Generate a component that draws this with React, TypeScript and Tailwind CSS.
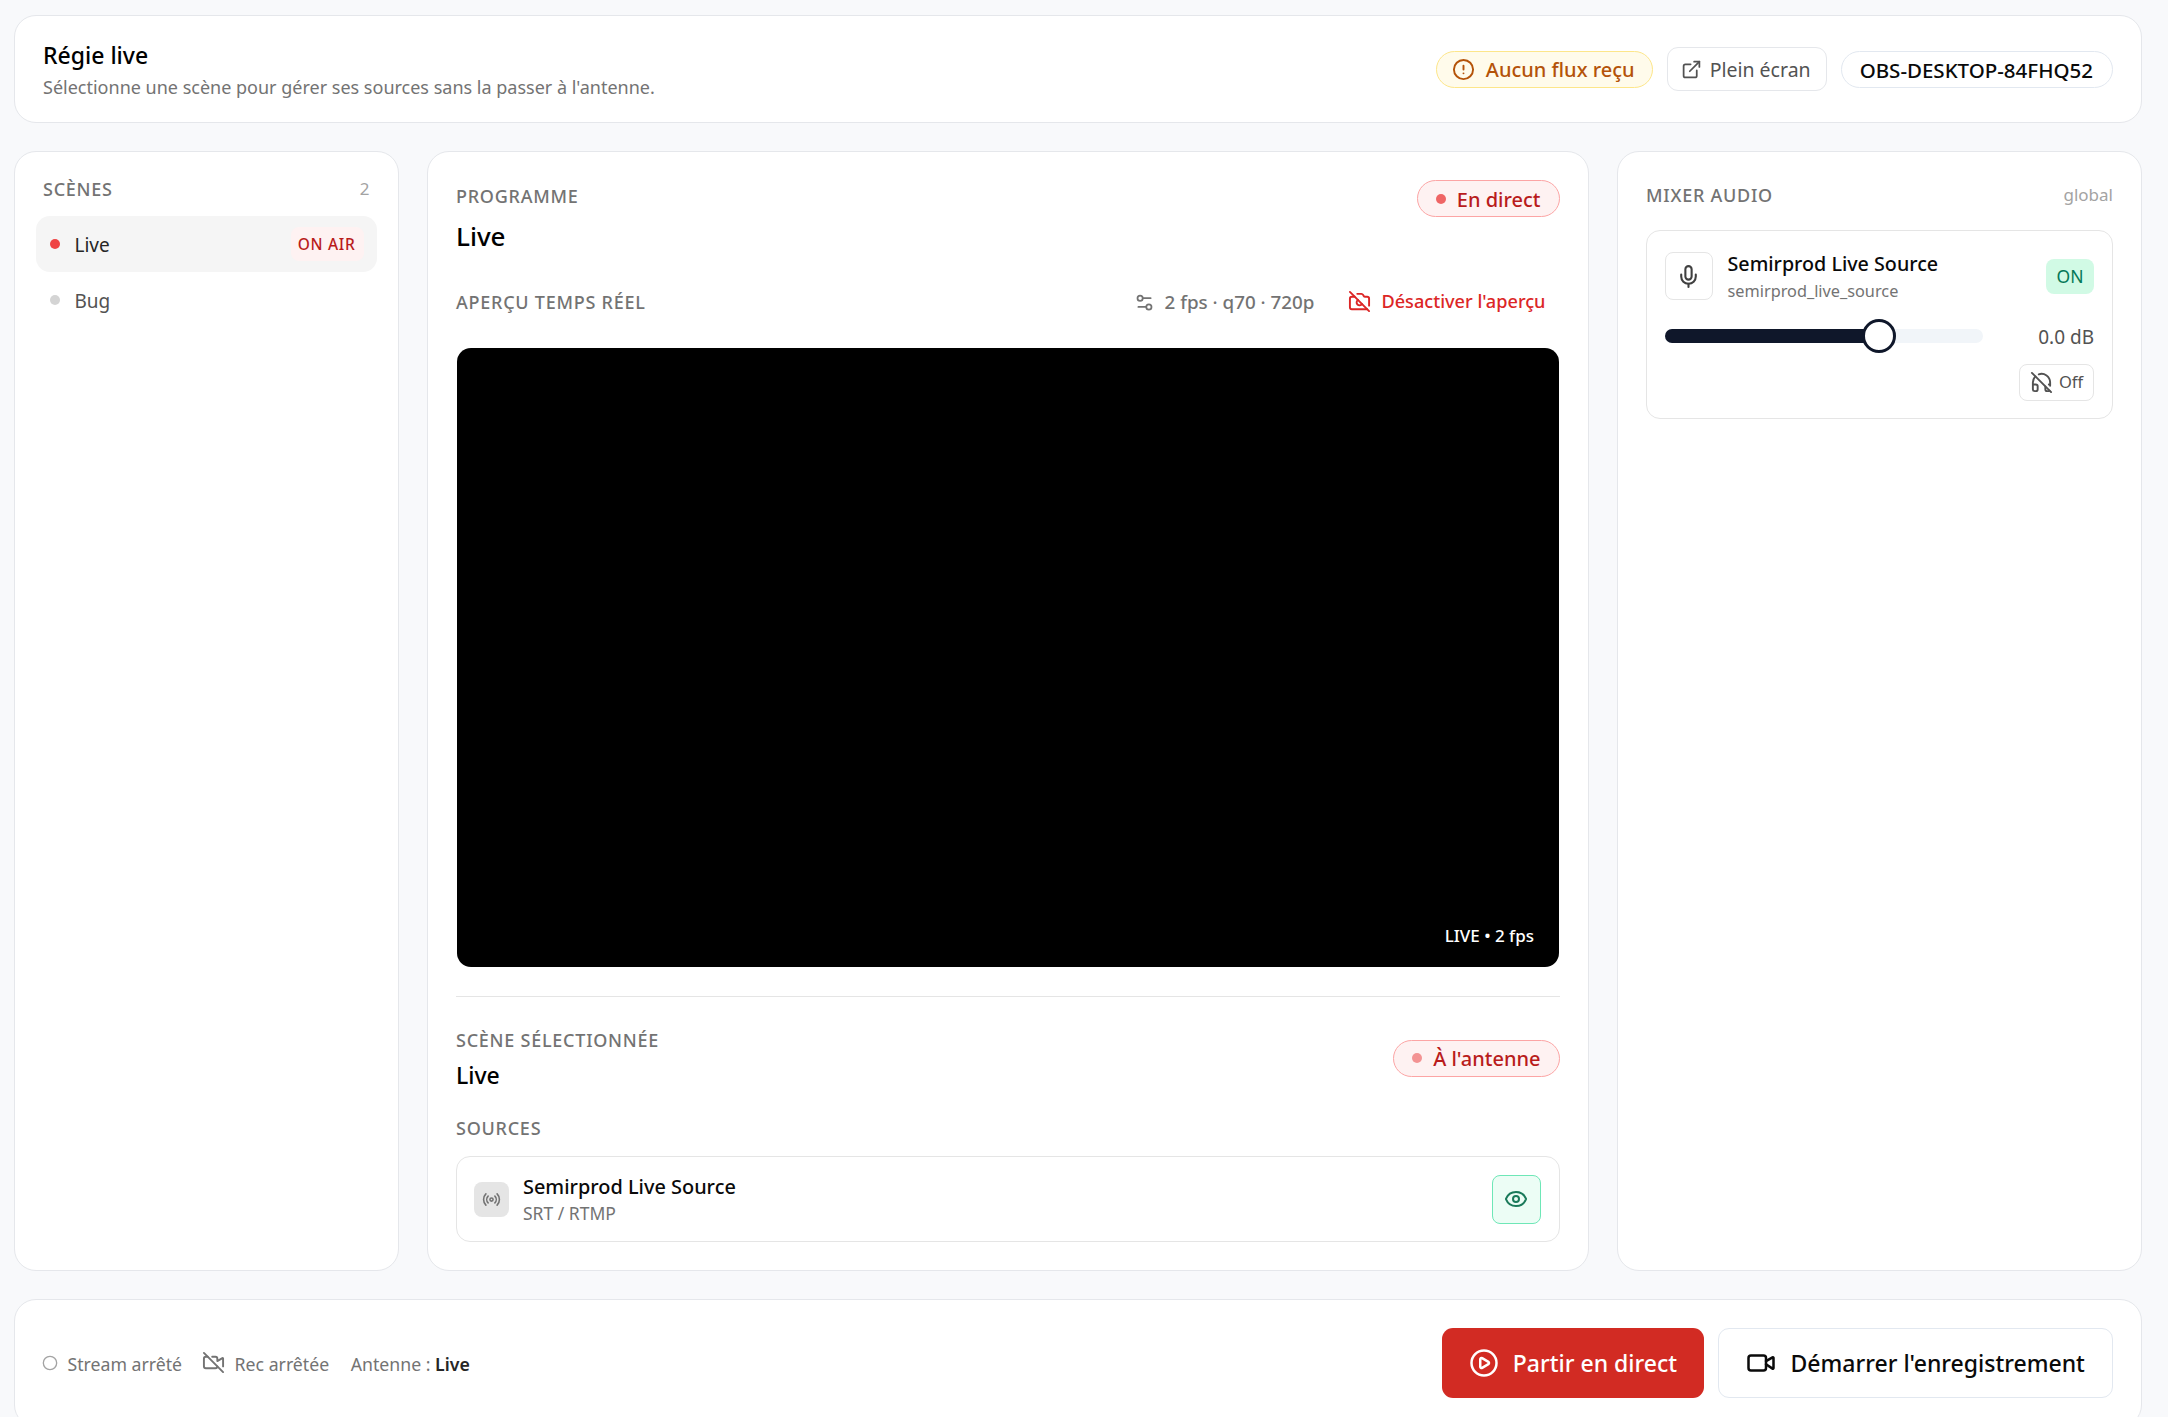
import {
  CameraOff,
  Circle,
  CircleAlert,
  CirclePlay,
  ExternalLink,
  Eye,
  HeadphoneOff,
  Mic,
  Radio,
  Settings2,
  Video,
  VideoOff,
} from 'lucide-react';

const label = 'text-[18px] font-medium tracking-[0.75px] text-[#737373] leading-[34px]';

function Pill({ text, dot }: { text: string; dot: string }) {
  return (
    <span className="flex h-[37px] items-center gap-[11px] rounded-full border border-[#fca5a5] bg-[#fef2f2] px-[18px] text-[20px] font-medium text-[#b91c1c]">
      <span className={`size-[10px] rounded-full ${dot}`} />
      <span className="pt-[2px]">{text}</span>
    </span>
  );
}

function Header() {
  return (
    <header className="flex h-[108px] shrink-0 items-center justify-between rounded-[22px] border border-[#e5e7eb] bg-white px-[28px]">
      <div className="pt-[5px]">
        <h1 className="text-[23px] leading-[33px] font-medium text-black">Régie live</h1>
        <p className="-mt-[1px] text-[18px] leading-[33px] text-[#737373]">
          Sélectionne une scène pour gérer ses sources sans la passer à l'antenne.
        </p>
      </div>
      <div className="flex items-center gap-[14px]">
        <span className="flex h-[37px] items-center gap-[11px] rounded-full border border-[#fde68a] bg-[#fffbeb] pr-[17px] pl-[15px] text-[20px] font-medium text-[#b45309]">
          <CircleAlert size={23} />
          <span className="pt-[2px]">Aucun flux reçu</span>
        </span>
        <button className="flex h-[44px] items-center gap-[8px] rounded-[11px] border border-[#e5e7eb] bg-white pr-[15px] pl-[13px] text-[19.5px] text-[#525252]">
          <ExternalLink size={21} />
          <span className="pt-[2px]">Plein écran</span>
        </button>
        <span className="flex h-[37px] items-center rounded-full border border-[#e2e8f0] pr-[19px] pl-[18px] text-[20.5px] font-medium text-[#0a0a0a]">
          <span className="pt-[2px]">OBS-DESKTOP-84FHQ52</span>
        </span>
      </div>
    </header>
  );
}

function ScenesPanel() {
  return (
    <section className="rounded-[22px] border border-[#e5e7eb] bg-white px-[21px] pt-[20px]">
      <div className="flex items-center justify-between px-[7px]">
        <span className={label}>SCÈNES</span>
        <span className="text-[17px] text-[#a3a3a3]">2</span>
      </div>
      <div className="mt-[10px]">
        <div className="flex h-[56px] items-center justify-between rounded-[14px] bg-[#f5f5f5] pr-[13px] pl-[14px]">
          <span className="flex items-center gap-[14.5px] text-[19px] text-[#262626]">
            <span className="size-[10px] rounded-full bg-[#ef4444]" />
            <span className="pt-[3px]">Live</span>
          </span>
          <span className="flex h-[34px] items-center rounded-[8px] bg-[#fef2f2] pt-[1px] pr-[8px] pl-[7px] text-[15.5px] font-medium tracking-[0.7px] text-[#b91c1c]">
            ON AIR
          </span>
        </div>
        <div className="flex h-[56px] items-center gap-[14.5px] pl-[14px] text-[19px] text-[#525252]">
          <span className="mb-[1px] size-[10px] rounded-full bg-[#d4d4d4]" />
          <span className="pt-[3px]">Bug</span>
        </div>
      </div>
    </section>
  );
}

function ProgramPanel() {
  return (
    <section className="rounded-[22px] border border-[#e5e7eb] bg-white px-[28px] pt-[28px]">
      <div className="flex items-start justify-between">
        <div className="-mt-[1px]">
          <div className={label}>PROGRAMME</div>
          <div className="text-[26px] leading-[46px] font-medium text-black">Live</div>
        </div>
        <Pill text="En direct" dot="bg-[#ef6565]" />
      </div>

      <div className="mt-[21px] flex h-[44px] items-center justify-between">
        <span className={label}>APERÇU TEMPS RÉEL</span>
        <div className="flex items-center">
          <span className="flex items-center gap-[10px] text-[18.8px] font-medium text-[#737373]">
            <Settings2 size={21} />2 fps · q70 · 720p
          </span>
          <button className="ml-[34px] flex items-center gap-[10px] pr-[14px] text-[18.15px] font-medium text-[#dc2626]">
            <CameraOff size={23} />
            Désactiver l'aperçu
          </button>
        </div>
      </div>

      <div className="relative mx-[0.5px] mt-[24px] h-[619px] rounded-[14px] bg-black">
        <span className="absolute right-[25px] bottom-[19px] text-[17px] font-medium text-white">LIVE • 2 fps</span>
      </div>

      <div className="mt-[29px] border-t border-[#e5e5e5] pt-[26px]">
        <div className="flex items-center justify-between">
          <div>
            <div className={label}>SCÈNE SÉLECTIONNÉE</div>
            <div className="text-[23px] leading-[36px] font-medium text-black">Live</div>
          </div>
          <Pill text="À l'antenne" dot="bg-[#f39393]" />
        </div>
        <div className={`mt-[18px] ${label}`}>SOURCES</div>
        <div className="mt-[11px] flex h-[86px] items-center justify-between rounded-[14px] border border-[#e5e5e5] pr-[18px] pl-[17px]">
          <div className="flex items-center gap-[14px]">
            <span className="flex size-[35px] items-center justify-center rounded-[8px] bg-[#e5e5e5] text-[#737373]">
              <Radio size={19} />
            </span>
            <div>
              <div className="text-[19.9px] leading-[28px] font-medium text-[#0a0a0a]">Semirprod Live Source</div>
              <div className="text-[17.5px] leading-[24px] text-[#737373]">SRT / RTMP</div>
            </div>
          </div>
          <button className="flex size-[49px] items-center justify-center rounded-[8px] border border-[#6ee7b7] bg-[#ecfdf5] text-[#1a7a5a]">
            <Eye size={24} />
          </button>
        </div>
      </div>
    </section>
  );
}

function MixerPanel() {
  return (
    <section className="rounded-[22px] border border-[#e5e7eb] bg-white px-[28px] pt-[26px]">
      <div className="flex items-center justify-between">
        <span className={label}>MIXER AUDIO</span>
        <span className="text-[17px] text-[#a3a3a3]">global</span>
      </div>
      <div className="mt-[18px] rounded-[14px] border border-[#e5e5e5] pt-[20px] pr-[18px] pb-[17px] pl-[17.5px]">
        <div className="flex h-[50px] items-center justify-between">
          <div className="flex items-center gap-[15px]">
            <span className="flex size-[48px] items-center justify-center rounded-[8px] border border-[#e5e5e5] text-[#404040]">
              <Mic size={25} />
            </span>
            <div className="pt-[2px]">
              <div className="text-[19.7px] leading-[28px] font-medium text-[#0a0a0a]">Semirprod Live Source</div>
              <div className="text-[16.3px] leading-[26px] text-[#737373]">semirprod_live_source</div>
            </div>
          </div>
          <span className="flex h-[35px] w-[48px] items-center justify-center rounded-[8px] bg-[#d1fae5] text-[17.5px] text-[#047857]">
            ON
          </span>
        </div>
        <div className="mt-[18px] flex h-[34px] items-center justify-between">
          <div className="relative h-[14px] w-[318px] rounded-full bg-[#f1f5f9]">
            <div className="h-full w-[67%] rounded-full bg-[#0f172a]" />
            <span className="absolute top-[-10px] left-[197px] size-[34px] rounded-full border-[3.5px] border-[#0f172a] bg-white" />
          </div>
          <span className="pt-[3px] text-[19px] text-[#525252]">0.0 dB</span>
        </div>
        <div className="mt-[11px] flex justify-end">
          <button className="flex h-[37px] w-[75px] items-center justify-center gap-[6px] rounded-[8px] border border-[#e5e5e5] text-[16.5px] text-[#525252]">
            <HeadphoneOff size={23} />
            Off
          </button>
        </div>
      </div>
    </section>
  );
}

function Footer() {
  return (
    <footer className="flex h-[128px] shrink-0 items-start justify-between rounded-[22px] border border-[#e5e7eb] bg-white px-[28px] pt-[28px]">
      <div className="flex h-[70px] items-center text-[17.7px] text-[#737373]">
        <span className="-ml-[1px] flex items-center gap-[9.5px]">
          <Circle size={16} className="text-[#a3a3a3]" />
          <span className="pt-[2px]">Stream arrêté</span>
        </span>
        <span className="ml-[20px] flex items-center gap-[9.5px]">
          <VideoOff size={23} />
          <span className="pt-[2px]">Rec arrêtée</span>
        </span>
        <span className="ml-[21.5px] pt-[2px]">
          Antenne : <span className="font-semibold text-[#262626]">Live</span>
        </span>
      </div>
      <div className="flex items-center gap-[14px]">
        <button className="flex h-[70px] w-[262px] items-center justify-center gap-[14px] rounded-[11px] bg-[#d22b23] text-[23px] font-medium text-white">
          <CirclePlay size={30} />
          Partir en direct
        </button>
        <button className="flex h-[70px] w-[395px] items-center justify-center gap-[14.5px] rounded-[11px] border border-[#e2e8f0] bg-white text-[23px] font-medium text-[#0a0a0a]">
          <Video size={30} />
          Démarrer l'enregistrement
        </button>
      </div>
    </footer>
  );
}

export default function App() {
  return (
    <div className="flex h-screen flex-col gap-[28px] overflow-hidden bg-[#f8f9fb] pt-[15px] pr-[26px] pl-[14px] font-['Noto_Sans',sans-serif]">
      <Header />
      <main className="grid h-[1120px] shrink-0 grid-cols-[384.5px_1161.5px_525px] gap-[28.5px]">
        <ScenesPanel />
        <ProgramPanel />
        <MixerPanel />
      </main>
      <Footer />
    </div>
  );
}
